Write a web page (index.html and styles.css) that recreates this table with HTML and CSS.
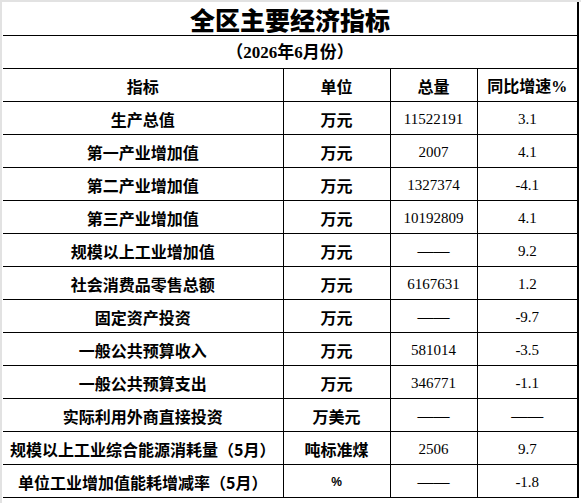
FILE: index.html
```html
<!DOCTYPE html>
<html lang="zh-CN">
<head>
<meta charset="utf-8">
<title>全区主要经济指标</title>
<link rel="stylesheet" href="styles.css">
</head>
<body>
<div class="sheet">
  <span class="sel-mark"></span>
  <table class="grid">
    <colgroup>
      <col class="c1"><col class="c2"><col class="c3"><col class="c4">
    </colgroup>
    <tr class="title-row"><td colspan="4" class="title">全区主要经济指标</td></tr>
    <tr class="sub-row"><td colspan="4" class="subtitle">（2026年6月份）</td></tr>
    <tr class="head"><td>指标</td><td>单位</td><td>总量</td><td>同比增速<span class="pct">%</span></td></tr>
    <tr><td class="name">生产总值</td><td class="unit">万元</td><td class="num">11522191</td><td class="num">3.1</td></tr>
    <tr><td class="name">第一产业增加值</td><td class="unit">万元</td><td class="num">2007</td><td class="num">4.1</td></tr>
    <tr><td class="name">第二产业增加值</td><td class="unit">万元</td><td class="num">1327374</td><td class="num">-4.1</td></tr>
    <tr><td class="name">第三产业增加值</td><td class="unit">万元</td><td class="num">10192809</td><td class="num">4.1</td></tr>
    <tr><td class="name">规模以上工业增加值</td><td class="unit">万元</td><td class="num dash">——</td><td class="num">9.2</td></tr>
    <tr><td class="name">社会消费品零售总额</td><td class="unit">万元</td><td class="num">6167631</td><td class="num">1.2</td></tr>
    <tr><td class="name">固定资产投资</td><td class="unit">万元</td><td class="num dash">——</td><td class="num">-9.7</td></tr>
    <tr><td class="name">一般公共预算收入</td><td class="unit">万元</td><td class="num">581014</td><td class="num">-3.5</td></tr>
    <tr><td class="name">一般公共预算支出</td><td class="unit">万元</td><td class="num">346771</td><td class="num">-1.1</td></tr>
    <tr><td class="name">实际利用外商直接投资</td><td class="unit">万美元</td><td class="num dash">——</td><td class="num dash">——</td></tr>
    <tr><td class="name">规模以上工业综合能源消耗量（5月）</td><td class="unit">吨标准煤</td><td class="num">2506</td><td class="num">9.7</td></tr>
    <tr><td class="name">单位工业增加值能耗增减率（5月）</td><td class="unit pct-unit">%</td><td class="num dash">——</td><td class="num">-1.8</td></tr>
  </table>
</div>
</body>
</html>
```

FILE: styles.css
```css
html, body {
  margin: 0;
  padding: 0;
  background: #ffffff;
}

body {
  font-family: "Noto Sans CJK SC", "Noto Sans", sans-serif;
  color: #000;
}

.sheet {
  position: relative;
  width: 581px;
  height: 503px;
  box-sizing: border-box;
  border-top: 2px solid #e2e2e2;
  border-left: 2px solid #e2e2e2;
  padding-left: 1px;
  overflow: hidden;
}

.sel-mark {
  position: absolute;
  top: -2px;
  left: 575px;
  width: 4px;
  height: 2px;
  background: #21a366;
}

.grid {
  border-collapse: collapse;
  table-layout: fixed;
  width: 575px;
}

.c1 { width: 280px; }
.c2 { width: 107px; }
.c3 { width: 87px; }
.c4 { width: 101px; }

.grid td {
  border: 1px solid #000;
  padding: 0;
  text-align: center;
  vertical-align: middle;
  white-space: nowrap;
  overflow: visible;
  font-size: 16px;
  font-weight: 700;
  line-height: 20px;
}

.grid tr {
  height: 33px;
}

.grid tr td:first-child {
  border-left: none;
}

.grid tr td:last-child {
  border-right: 2px solid #000;
}

.grid .title-row td {
  border-top: none;
}

.title {
  font-size: 25px !important;
  font-weight: 900 !important;
  padding-top: 1px !important;
}

.subtitle {
  font-size: 17px !important;
  padding-top: 2px !important;
}

.subtitle,
.pct {
  font-family: "Liberation Serif", "Noto Sans CJK SC", serif;
}

.head td {
  padding-top: 3px;
}

.name, .unit {
  padding-top: 3px !important;
}

.grid td.num {
  font-family: "Liberation Serif", serif;
  font-weight: 400;
  font-size: 15px;
  padding-top: 3px;
}

.grid td.dash {
  color: #000;
  font-size: 16px;
}

.pct-unit {
  font-family: "Liberation Sans", sans-serif;
  font-size: 12px !important;
}
```
